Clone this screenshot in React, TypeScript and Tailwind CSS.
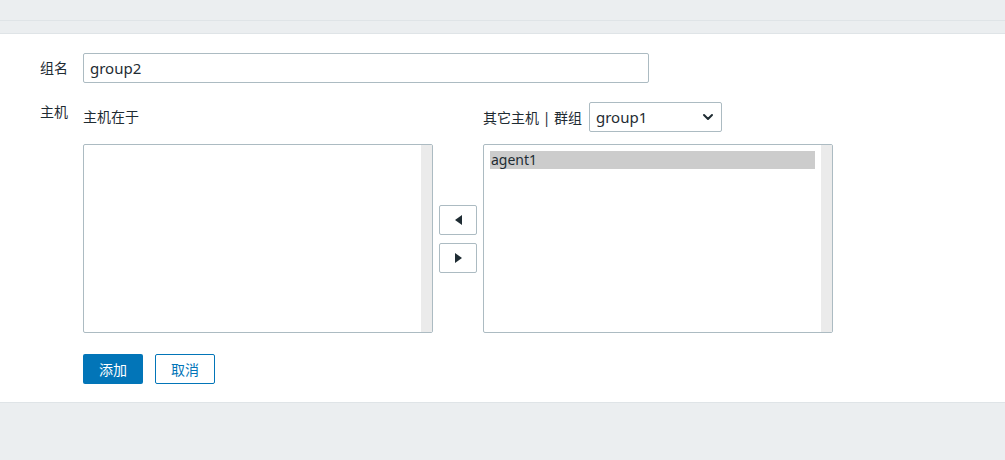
import { ChevronDown } from "lucide-react";

const FONT = "font-['Noto_Sans','Noto_Sans_CJK_SC',sans-serif]";

function ListBox({ items, selected }: { items: string[]; selected?: string }) {
  return (
    <div className="relative flex h-[189px] w-[350px] rounded-[2px] border border-[#acbbc2] bg-white">
      <div className="flex-1 pl-[6px] pr-[6px] pt-[6px]">
        {items.map((item) => (
          <div
            key={item}
            className={
              "h-[18px] pl-[1px] text-[14px] leading-[18px] text-[#1f2c33] " +
              (item === selected ? "bg-[#cccccc]" : "")
            }
          >
            {item}
          </div>
        ))}
      </div>
      <div className="w-[11px] shrink-0 bg-[#ebebeb]" />
    </div>
  );
}

function ArrowButton({ dir }: { dir: "left" | "right" }) {
  return (
    <button className="flex h-[30px] w-[38px] items-center justify-center rounded-[2px] border border-[#acbbc2] bg-white">
      <svg width="7" height="10" viewBox="0 0 7 10">
        {dir === "left" ? (
          <polygon points="7,0 7,10 0,5" fill="#1f2c33" />
        ) : (
          <polygon points="0,0 0,10 7,5" fill="#1f2c33" />
        )}
      </svg>
    </button>
  );
}

export default function App() {
  return (
    <div className={`flex h-[460px] w-full flex-col bg-[#ebeef0] ${FONT} text-[14px] text-[#1f2c33]`}>
      <div className="h-[21px] border-b border-[#dfe4e7]" />
      <div className="h-[13px] border-b border-[#dfe4e7]" />

      <div className="border-b border-[#dfe4e7] bg-white pb-[18px] pt-[19px]">
        <div className="flex items-center">
          <label className="w-[83px] pl-[40px] leading-[30px]">组名</label>
          <div className="flex h-[30px] w-[566px] items-center rounded-[2px] border border-[#acbbc2] px-[6px] text-[15px]">
            group2
          </div>
        </div>

        <div className="mt-[19px] flex">
          <label className="w-[83px] pl-[40px] pt-[1px] leading-[18px]">主机</label>
          <div className="flex flex-col">
            <div className="flex items-start">
              <div className="flex w-[350px] flex-col">
                <div className="h-[30px] pt-[4px] leading-[22px]">主机在于</div>
                <div className="mt-[12px]">
                  <ListBox items={[]} />
                </div>
              </div>
              <div className="mt-[42px] flex h-[189px] w-[50px] flex-col items-center justify-center gap-[8px]">
                <ArrowButton dir="left" />
                <ArrowButton dir="right" />
              </div>
              <div className="flex w-[350px] flex-col">
                <div className="flex h-[30px] items-center gap-[7px]">
                  <span>其它主机 | 群组</span>
                  <div className="flex h-[30px] w-[133px] items-center justify-between rounded-[2px] border border-[#acbbc2] pl-[6px] pr-[5px] text-[15px]">
                    <span>group1</span>
                    <ChevronDown size={16} strokeWidth={3} />
                  </div>
                </div>
                <div className="mt-[12px]">
                  <ListBox items={["agent1"]} selected="agent1" />
                </div>
              </div>
            </div>

            <div className="mt-[21px] flex gap-[12px]">
              <button className="h-[30px] w-[60px] rounded-[2px] bg-[#0275b8] text-[14px] text-white">
                添加
              </button>
              <button className="h-[30px] w-[60px] rounded-[2px] border border-[#0275b8] bg-white text-[14px] text-[#0275b8]">
                取消
              </button>
            </div>
          </div>
        </div>
      </div>
    </div>
  );
}
